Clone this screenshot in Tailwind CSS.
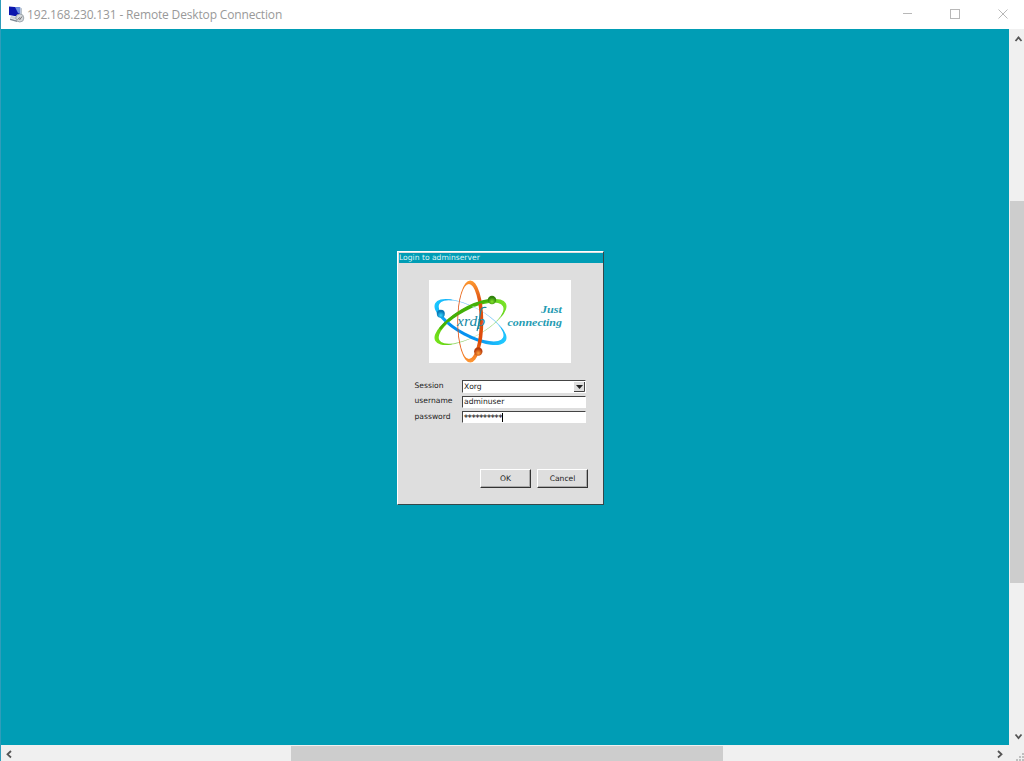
<!DOCTYPE html>
<html lang="en">
<head>
<meta charset="utf-8">
<title>Remote Desktop Connection</title>
<script src="https://cdn.jsdelivr.net/npm/@tailwindcss/browser@4"></script>
</head>
<body class="h-[761px] w-[1024px] overflow-hidden bg-white">
<div class="flex h-[761px] w-[1024px] flex-col border-l border-[#2f9dba]">
  <header class="flex h-[29px] shrink-0 items-center bg-white pl-[7px] text-[#999]">
    <svg class="mb-[2px] h-[18px] w-[17px] shrink-0" viewBox="0 0 17 18">
      <path d="M1 1.5L12 2.5V12L1 10Z" fill="#0b16ad"/>
      <path d="M7 2L12.5 2.5V9L10 8Z" fill="#6b8fe0"/>
      <path d="M12.5 2.5L14 3.5V11L12.5 11Z" fill="#b9c3cb"/>
      <path d="M3 11L11 12L10 15L2 13Z" fill="#c9d0d5"/>
      <path d="M2 13.5L9 15.5V17L2 15Z" fill="#7f8a94"/>
      <circle cx="11.8" cy="13" r="4" fill="#d4d8db" stroke="#8e989f" stroke-width=".8"/>
      <path d="M9.5 14.5L12 12.5M11.5 15L14 11.5" stroke="#777" stroke-width="1" fill="none"/>
    </svg>
    <h1 class="ml-[2px] whitespace-nowrap font-['Open_Sans','Noto_Sans',sans-serif] text-[12px] leading-[18px] tracking-[-0.155px]">192.168.230.131 - Remote Desktop Connection</h1>
    <svg class="ml-auto h-[29px] w-[130px] shrink-0" viewBox="0 0 130 29" fill="none" stroke="#b8b8b8">
      <path d="M9 13.5H18"/>
      <rect x="56.5" y="9.5" width="9" height="9"/>
      <path d="M104.500 9.500L113.500 18.500M113.500 9.500L104.500 18.500"/>
    </svg>
  </header>
  <div class="flex h-[716px] shrink-0">
    <main class="flex w-[1008px] shrink-0 justify-center bg-[#009db5] pt-[222px] pr-[9px]">
      <section class="flex h-[254px] w-[207px] flex-col border border-t-white border-r-[#34474a] border-b-[#34474a] border-l-white bg-[#dedede] font-['DejaVu_Sans',sans-serif] text-[7.6px] text-[#222]">
        <h2 class="mt-px ml-px h-[10px] shrink-0 bg-[#009db5] leading-[10px] whitespace-nowrap text-[#dff5f8]">Login to adminserver</h2>
        <svg class="mt-[17px] ml-[31px] h-[83px] w-[142px] shrink-0 bg-white" viewBox="429 280 142 83">
          <defs>
            <linearGradient id="orange" x1="0" y1="0" x2="0" y2="1"><stop stop-color="#ff9b32"/><stop offset=".25" stop-color="#dd5113"/><stop offset=".75" stop-color="#de4b0a"/><stop offset="1" stop-color="#ff9a36"/></linearGradient>
            <linearGradient id="blue"><stop stop-color="#1cc9ff"/><stop offset=".3" stop-color="#008df0"/><stop offset=".7" stop-color="#0895f0"/><stop offset="1" stop-color="#22cbff"/></linearGradient>
            <linearGradient id="green"><stop stop-color="#77e51c"/><stop offset=".35" stop-color="#40aa08"/><stop offset=".7" stop-color="#45b80a"/><stop offset="1" stop-color="#7ce52a"/></linearGradient>
            <radialGradient id="ballBlue" cx=".5" cy=".7"><stop stop-color="#38d5ff"/><stop offset="1" stop-color="#0878b5"/></radialGradient>
            <radialGradient id="ballGreen" cx=".5" cy=".7"><stop stop-color="#82e52c"/><stop offset="1" stop-color="#31840d"/></radialGradient>
            <radialGradient id="ballOrange" cx=".5" cy=".7"><stop stop-color="#ffa03b"/><stop offset="1" stop-color="#b83c0b"/></radialGradient>
          </defs>
          <path transform="translate(470.500 322) rotate(-28)" fill="url(#green)" fill-rule="evenodd" d="M-40 0A40 15 0 0 1 40 0A40 15 0 0 1-40 0ZM-36 1.300A36 13.300 0 0 1 36 1.300A36 13.300 0 0 1-36 1.300Z"/>
          <path transform="translate(470.500 322) rotate(-28)" fill="none" stroke="#fff" stroke-opacity=".4" stroke-width="1.800" d="M-27 11A40 15 0 0 0 30 10"/>
          <path transform="translate(470.500 322) rotate(28)" fill="url(#blue)" fill-rule="evenodd" d="M-40 0A40 15 0 0 1 40 0A40 15 0 0 1-40 0ZM-36-1.300A36 13.300 0 0 1 36-1.300A36 13.300 0 0 1-36-1.300Z"/>
          <path transform="translate(470.500 322) rotate(28)" fill="none" stroke="#fff" stroke-opacity=".4" stroke-width="1.800" d="M-27-11A40 15 0 0 1 30-10"/>
          <path transform="translate(470.300 321.500)" fill="url(#orange)" fill-rule="evenodd" d="M-13 0A13 41 0 0 1 13 0A13 41 0 0 1-13 0ZM-12.200 0A10.800 37.500 0 0 1 9.400 0A10.800 37.500 0 0 1-12.200 0Z"/>
          <path d="M440 329C450 316 470 303 490 300" fill="none" stroke="#43b007" stroke-width="2.300"/>
          <circle cx="440.800" cy="313.800" r="4" fill="url(#ballBlue)"/>
          <circle cx="492" cy="300" r="4.200" fill="url(#ballGreen)"/>
          <circle cx="478.300" cy="351.500" r="4.200" fill="url(#ballOrange)"/>
          <g fill="#1689a5" font-family="Liberation Serif, serif" font-style="italic">
            <text x="457" y="325.500" font-size="14.500" textLength="28" lengthAdjust="spacingAndGlyphs">xrdp</text>
            <g font-size="10" font-weight="bold" fill="#249bb2">
              <text x="541" y="312.500" textLength="21" lengthAdjust="spacingAndGlyphs">Just</text>
              <text x="507.500" y="325.500" textLength="54.500" lengthAdjust="spacingAndGlyphs">connecting</text>
            </g>
          </g>
          <path d="M477 331C480 322 479.500 313 481.500 309C482.500 307 484 307 486.500 307.500" stroke="#1689a5" stroke-width="1.200" fill="none"/>
        </svg>
        <div class="mt-[17px] ml-[16.5px] grid grid-cols-[47.5px_124px] gap-y-[3px]">
          <span class="leading-[11px]">Session</span>
          <div class="flex h-[13px] items-center justify-between border-t-[1.5px] border-l-[1.5px] border-t-[#444] border-l-[#444] border-r border-b border-r-white border-b-white bg-white pl-px"><span class="leading-[10px]">Xorg</span>
            <svg class="h-[10px] w-[11px]" viewBox="0 0 11 10"><path fill="#dedede" d="M0 0H11V10H0Z"/><path stroke="#444" fill="none" d="M10.500 0V9.500H0"/><path fill="#222" d="M2 3H9L5.500 7Z"/></svg>
          </div>
          <span class="leading-[10px]">username</span>
          <div class="h-[12px] border-t-[1.5px] border-l-[1.5px] border-t-[#444] border-l-[#444] border-r border-b border-r-white border-b-white bg-white pl-px leading-[10px]">adminuser</div>
          <span class="leading-[11px]">password</span>
          <div class="flex h-[12px] border-t-[1.5px] border-l-[1.5px] border-t-[#444] border-l-[#444] border-r border-b border-r-white border-b-white bg-white pl-px leading-[11px]"><span class="font-bold tracking-[-0.15px]">**********</span><span class="mt-px h-[9px] w-px bg-black"></span></div>
        </div>
        <div class="mt-[46px] mr-[15px] flex justify-end gap-[6px]">
          <button class="h-[19px] w-[51px] border border-t-white border-r-[#333] border-b-[#333] border-l-white leading-[18px] shadow-[inset_-1px_-1px_#aaa]">OK</button>
          <button class="h-[19px] w-[51px] border border-t-white border-r-[#333] border-b-[#333] border-l-white leading-[18px] shadow-[inset_-1px_-1px_#aaa]">Cancel</button>
        </div>
      </section>
    </main>
    <aside class="flex w-[15px] shrink-0 flex-col bg-[#f0f0f0] pl-px">
      <svg class="h-[172px] w-[14px]" viewBox="0 0 14 172"><path d="M5.500 12L8.500 8.500L11.500 12" fill="none" stroke="#555" stroke-width="1.800"/></svg>
      <div class="h-[382px] bg-[#cdcdcd]"></div>
      <svg class="mt-auto h-[20px] w-[14px]" viewBox="0 0 14 20"><path d="M5.500 9.500L8.500 13L11.500 9.500" fill="none" stroke="#555" stroke-width="1.800"/></svg>
    </aside>
  </div>
  <footer class="flex h-[16px] shrink-0 bg-[#f0f0f0] pt-px">
    <svg class="h-[15px] w-[290px]" viewBox="0 0 290 15"><path d="M10 5L6.500 8.300L10 11.500" fill="none" stroke="#555" stroke-width="1.800"/></svg>
    <div class="h-[15px] w-[432px] bg-[#cdcdcd]"></div>
    <svg class="ml-auto h-[15px] w-[40px]" viewBox="0 0 40 15"><path d="M14 5L17.500 8.300L14 11.500" fill="none" stroke="#555" stroke-width="1.800"/><path d="M38 7h2v2h-2zM38 10h2v2h-2zM35 10h2v2h-2zM38 13h2v2h-2zM35 13h2v2h-2zM32 13h2v2h-2z" fill="#bfbfbf"/></svg>
  </footer>
</div>
</body>
</html>
